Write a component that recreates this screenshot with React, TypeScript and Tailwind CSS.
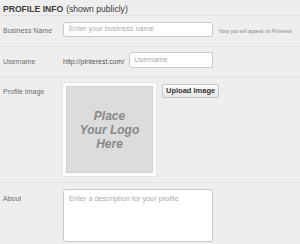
import * as React from "react";

export default function App() {
	return (
		<div className="h-[244px] w-[300px] overflow-hidden bg-[#efeeee] font-['Liberation_Sans',Arial,sans-serif]">
			{/* Title */}
			<div className="flex h-[16px] items-center border-b border-[#e2e1e1] pl-[3px] pt-[3px] text-[8.6px] leading-[10px] text-[#3a3a3a]">
				<span className="font-bold">PROFILE INFO</span>
				<span className="ml-[3px]">(shown publicly)</span>
			</div>

			{/* Business name */}
			<div className="flex h-[31px] items-start border-b border-[#e2e1e1] pl-[3px] pt-[6px]">
				<div className="w-[60px] shrink-0 pt-[4px] text-[7px] text-[#6e6e6e]">Business Name</div>
				<div className="flex h-[15px] w-[150px] items-center rounded-[3px] border border-[#c9c9c9] bg-white pl-[5px] text-[7.3px] text-[#aaa]">
					Enter your business name
				</div>
				<div className="ml-[6px] pt-[6px] text-[5px] text-[#888]">How you will appear on Pinterest</div>
			</div>

			{/* Username */}
			<div className="flex h-[31px] items-start border-b border-[#e2e1e1] pl-[3px] pt-[5px]">
				<div className="w-[60px] shrink-0 pt-[5px] text-[7px] text-[#6e6e6e]">Username</div>
				<div className="w-[66px] pt-[5px] text-[7px] text-[#555]">http://pinterest.com/</div>
				<div className="flex h-[16px] w-[84px] items-center rounded-[3px] border border-[#c9c9c9] bg-white pl-[4px] text-[7.3px] text-[#aaa]">
					Username
				</div>
			</div>

			{/* Profile image */}
			<div className="flex h-[105px] items-start border-b border-[#e2e1e1] pl-[3px] pt-[4px]">
				<div className="w-[59px] shrink-0 pt-[5px] text-[7px] text-[#6e6e6e]">Profile Image</div>
				<div className="h-[95px] w-[95px] border border-[#e6e6e6] bg-white p-[3px]">
					<div className="flex h-full w-full items-center justify-center border border-[#d0d0d0] bg-[#dcdcdc] text-center text-[12px] font-bold italic leading-[14px] text-[#888]">
						Place
						<br />
						Your Logo
						<br />
						Here
					</div>
				</div>
				<button className="ml-[5px] mt-[2px] h-[14px] rounded-[2px] border border-[#c4c4c4] bg-gradient-to-b from-[#fdfdfd] to-[#e6e6e6] px-[3px] text-[7.5px] font-bold leading-none text-[#333]">
					Upload Image
				</button>
			</div>

			{/* About */}
			<div className="flex items-start pl-[3px] pt-[6px]">
				<div className="w-[60px] shrink-0 pt-[5px] text-[7px] text-[#6e6e6e]">About</div>
				<div className="h-[53px] w-[150px] rounded-[3px] border border-[#c9c9c9] bg-white pl-[5px] pt-[4px] text-[7.3px] text-[#aaa]">
					Enter a description for your profile
				</div>
			</div>
		</div>
	);
}
